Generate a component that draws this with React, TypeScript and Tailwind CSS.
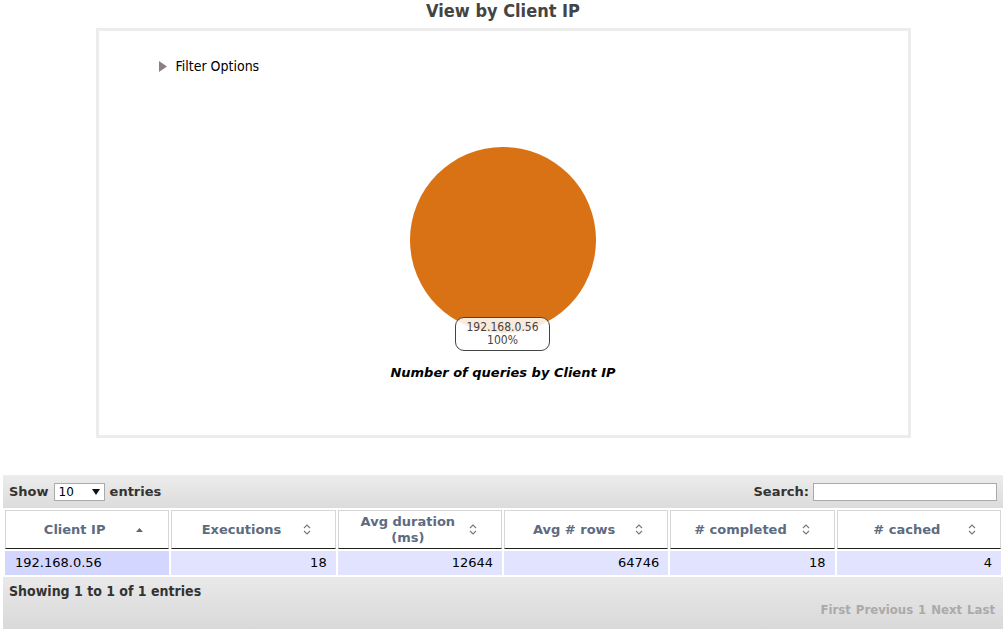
import React from "react";

const COLUMNS = [
  { title: "Client IP", sort: "asc" },
  { title: "Executions", sort: "both" },
  { title: "Avg duration (ms)", sort: "both" },
  { title: "Avg # rows", sort: "both" },
  { title: "# completed", sort: "both" },
  { title: "# cached", sort: "both" },
];

const ROWS = [["192.168.0.56", "18", "12644", "64746", "18", "4"]];

const SortIcon = ({ sort }: { sort: string }) => {
  if (sort === "asc") {
    return (
      <svg width="9" height="6" viewBox="0 0 9 6" className="shrink-0">
        <path d="M4.5 1 L8 5 L1 5 Z" fill="#666" />
      </svg>
    );
  }
  return (
    <svg width="8" height="11" viewBox="0 0 8 11" className="shrink-0">
      <path d="M1 4 L4 1 L7 4" fill="none" stroke="#777" strokeWidth="1.1" />
      <path d="M1 7 L4 10 L7 7" fill="none" stroke="#777" strokeWidth="1.1" />
    </svg>
  );
};

const ChartPanel = () => {
  return (
    <div className="mx-auto w-[815px] h-[410px] border-[3px] border-[#ececec] bg-white box-border">
      <div className="flex items-center gap-[9px] pl-[60px] pt-[27px] h-[43px]">
        <svg width="8" height="11" viewBox="0 0 8 11">
          <path d="M0 0 L8 5.5 L0 11 Z" fill="#8c8088" />
        </svg>
        <span className="text-[14px] leading-4 text-black font-['DejaVu_Sans_Condensed',sans-serif]">
          Filter Options
        </span>
      </div>
      <div className="relative mx-auto mt-[71px] w-[200px] h-[190px]">
        <svg width="200" height="190" viewBox="0 0 200 190">
          <circle cx="100" cy="95" r="93" fill="#d97115" />
        </svg>
        {/* tooltip over pie */}
        <div className="absolute left-[52px] top-[172px] w-[95px] h-[34px] rounded-[9px] border border-[#444] bg-white/85 flex flex-col items-center justify-center text-[12px] leading-[13px] text-[#444] font-['DejaVu_Sans_Condensed',sans-serif]">
          <span>192.168.0.56</span>
          <span>100%</span>
        </div>
      </div>
      <div className="mt-[30px] text-center text-[13px] leading-4 font-bold italic text-black font-['DejaVu_Sans',sans-serif]">
        Number of queries by Client IP
      </div>
    </div>
  );
};

const DataTable = () => {
  return (
    <div className="mx-[3px] mt-[37px] font-['DejaVu_Sans',sans-serif]">
      <div className="h-[33px] flex items-center justify-between px-[6px] bg-gradient-to-b from-[#ececec] to-[#dcdcdc] text-[13px] font-bold text-[#333]">
        <div className="flex items-center gap-[5px]">
          <span>Show</span>
          <div className="w-[51px] h-[18px] border border-[#aaa] bg-white flex items-center justify-between pl-[4px] pr-[4px] font-normal text-[12px] text-black">
            <span>10</span>
            <svg width="8" height="6" viewBox="0 0 8 6">
              <path d="M0 0 L8 0 L4 6 Z" fill="#111" />
            </svg>
          </div>
          <span>entries</span>
        </div>
        <div className="flex items-center gap-[4px]">
          <span>Search:</span>
          <div className="w-[184px] h-[18px] border border-[#aaa] bg-white" />
        </div>
      </div>
      <table className="w-full border-separate border-spacing-[2px] bg-white table-fixed">
        <thead>
          <tr>
            {COLUMNS.map((c) => (
              <th
                key={c.title}
                className="h-[39px] border border-[#d6d6d6] border-b-[#222] bg-white p-0 text-[13px] font-bold text-[#5d6b80] leading-4"
              >
                <div className="flex items-center pl-[8px] pr-[24px]">
                  <span className="flex-1 text-center px-2">{c.title}</span>
                  <SortIcon sort={c.sort} />
                </div>
              </th>
            ))}
          </tr>
        </thead>
        <tbody>
          {ROWS.map((r) => (
            <tr key={r[0]}>
              {r.map((v, i) => (
                <td
                  key={i}
                  className={`h-[24px] p-0 text-[13px] text-black ${
                    i === 0
                      ? "bg-[#d3d6ff] text-left pl-[10px]"
                      : "bg-[#e2e4ff] text-right pr-[9px]"
                  }`}
                >
                  {v}
                </td>
              ))}
            </tr>
          ))}
        </tbody>
      </table>
      <div className="h-[52px] bg-gradient-to-b from-[#e9e9e9] to-[#d9d9d9] px-[6px] pt-[6px] font-['DejaVu_Sans_Condensed',sans-serif]">
        <div className="text-[14px] font-bold text-[#333] leading-4">
          Showing 1 to 1 of 1 entries
        </div>
        <div className="mt-[3px] flex justify-end gap-[5px] pr-[2px] text-[13px] font-bold text-[#aaa] leading-4">
          <span>First</span>
          <span>Previous</span>
          <span>1</span>
          <span>Next</span>
          <span>Last</span>
        </div>
      </div>
    </div>
  );
};

const App = () => {
  return (
    <div className="w-[1006px] h-[637px] bg-white overflow-hidden">
      <h1 className="text-center text-[18px] leading-[22px] font-bold text-[#444] h-[28px] font-['DejaVu_Sans_Condensed',sans-serif]">
        View by Client IP
      </h1>
      <ChartPanel />
      <DataTable />
    </div>
  );
};

export default App;
